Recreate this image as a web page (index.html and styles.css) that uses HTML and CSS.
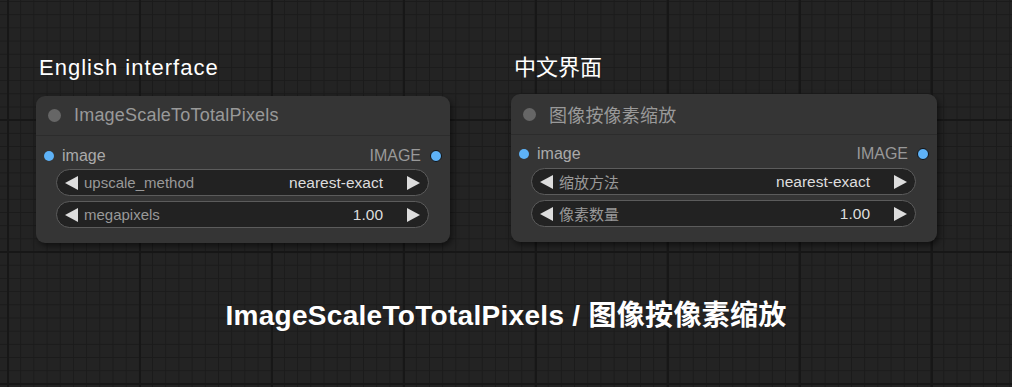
FILE: index.html
```html
<!DOCTYPE html>
<html lang="en">
<head>
  <meta charset="UTF-8" />
  <title>ImageScaleToTotalPixels</title>
  <meta name="viewport" content="width=device-width, initial-scale=1.0" />
  <link rel="stylesheet" href="styles.css">
</head>
<body>
  <div class="canvas">
    <div class="panels">
      <section class="panel panel-en">
        <h2 class="panel-label">English interface</h2>
        <div class="node">
          <div class="node-title">
            <span class="node-dot"></span>
            <span class="node-name">ImageScaleToTotalPixels</span>
          </div>
          <div class="slot-row">
            <span class="slot"><i class="socket"></i>image</span>
            <span class="slot slot-out">IMAGE<i class="socket socket-out"></i></span>
          </div>
          <div class="widget">
            <span class="arrow arrow-left"></span>
            <span class="widget-label">upscale_method</span>
            <span class="widget-value">nearest-exact</span>
            <span class="arrow arrow-right"></span>
          </div>
          <div class="widget">
            <span class="arrow arrow-left"></span>
            <span class="widget-label">megapixels</span>
            <span class="widget-value">1.00</span>
            <span class="arrow arrow-right"></span>
          </div>
        </div>
      </section>

      <section class="panel panel-zh">
        <h2 class="panel-label">中文界面</h2>
        <div class="node">
          <div class="node-title">
            <span class="node-dot"></span>
            <span class="node-name">图像按像素缩放</span>
          </div>
          <div class="slot-row">
            <span class="slot"><i class="socket"></i>image</span>
            <span class="slot slot-out">IMAGE<i class="socket socket-out"></i></span>
          </div>
          <div class="widget">
            <span class="arrow arrow-left"></span>
            <span class="widget-label">缩放方法</span>
            <span class="widget-value">nearest-exact</span>
            <span class="arrow arrow-right"></span>
          </div>
          <div class="widget">
            <span class="arrow arrow-left"></span>
            <span class="widget-label">像素数量</span>
            <span class="widget-value">1.00</span>
            <span class="arrow arrow-right"></span>
          </div>
        </div>
      </section>
    </div>

    <h1 class="caption">ImageScaleToTotalPixels / 图像按像素缩放</h1>
  </div>
</body>
</html>
```

FILE: styles.css
```css
html, body {
  margin: 0;
  padding: 0;
}

body {
  width: 1012px;
  height: 387px;
  overflow: hidden;
  font-family: 'Liberation Sans', Arial, 'Noto Sans CJK SC', sans-serif;
  background-color: #232323;
  background-image:
    linear-gradient(to right, #171717 2px, transparent 2px),
    linear-gradient(to bottom, #171717 2px, transparent 2px),
    linear-gradient(to right, #1b1b1b 1px, transparent 1px),
    linear-gradient(to bottom, #1b1b1b 1px, transparent 1px);
  background-size: 132px 132px, 132px 132px, 13.2px 13.2px, 13.2px 13.2px;
  background-position: 7px 0, 0 119px, 7px 1px, 7px 1px;
}

.canvas {
  padding-top: 55px;
}

.panels {
  display: grid;
  grid-template-columns: 414px 426px;
  column-gap: 61px;
  padding-left: 36px;
  align-items: start;
}

.panel-label {
  margin: 0 0 15px 3px;
  font-size: 22px;
  line-height: 26px;
  font-weight: normal;
  letter-spacing: 1px;
  color: #fff;
}

.panel-zh .panel-label {
  margin-bottom: 13px;
  letter-spacing: 0;
}

.node {
  background-color: #353535;
  border-radius: 9px;
  box-shadow: 2px 3px 6px rgba(0, 0, 0, 0.55);
  padding-bottom: 15px;
}

.panel-en .node {
  margin-top: 1px;
}

.node-title {
  display: flex;
  align-items: center;
  height: 39px;
  padding-left: 12px;
  border-bottom: 1px solid #2c2c2c;
}

.panel-zh .node-title {
  height: 40px;
}

.node-dot {
  width: 13px;
  height: 13px;
  border-radius: 50%;
  background-color: #666;
  margin-right: 13px;
}

.node-name {
  font-size: 18px;
  letter-spacing: 0.2px;
  color: #999;
}

.slot-row {
  display: flex;
  justify-content: space-between;
  align-items: center;
  height: 20px;
  padding: 10px 8px 0 8px;
  margin-bottom: 3px;
  font-size: 16px;
}

.panel-zh .slot-row {
  padding-top: 9px;
  margin-bottom: 4px;
}

.slot {
  display: flex;
  align-items: center;
  color: #aaa;
}

.slot-out {
  color: #999;
}

.socket {
  display: inline-block;
  width: 10px;
  height: 10px;
  border-radius: 50%;
  background-color: #5eb2f7;
  margin-right: 8px;
}

.socket-out {
  border: 1px solid #111;
  margin-right: 0;
  margin-left: 9px;
}

.widget {
  display: flex;
  align-items: center;
  box-sizing: border-box;
  height: 27px;
  margin: 0 21px 5px 20px;
  padding: 0 8px;
  background-color: #222;
  border: 1px solid #5c5c5c;
  border-radius: 14px;
  font-size: 15px;
}

.widget:last-child {
  margin-bottom: 0;
}

.arrow {
  width: 0;
  height: 0;
  border-top: 7px solid transparent;
  border-bottom: 7px solid transparent;
}

.arrow-left {
  border-right: 13px solid #ddd;
}

.arrow-right {
  border-left: 13px solid #ddd;
}

.widget-label {
  margin-left: 6px;
  color: #999;
}

.widget-value {
  margin-left: auto;
  margin-right: 24px;
  font-size: 15.5px;
  color: #ddd;
}

.caption {
  margin: 56px 0 0 0;
  text-align: center;
  font-size: 28px;
  line-height: 34px;
  font-weight: bold;
  letter-spacing: 0.3px;
  color: #fff;
}
```
